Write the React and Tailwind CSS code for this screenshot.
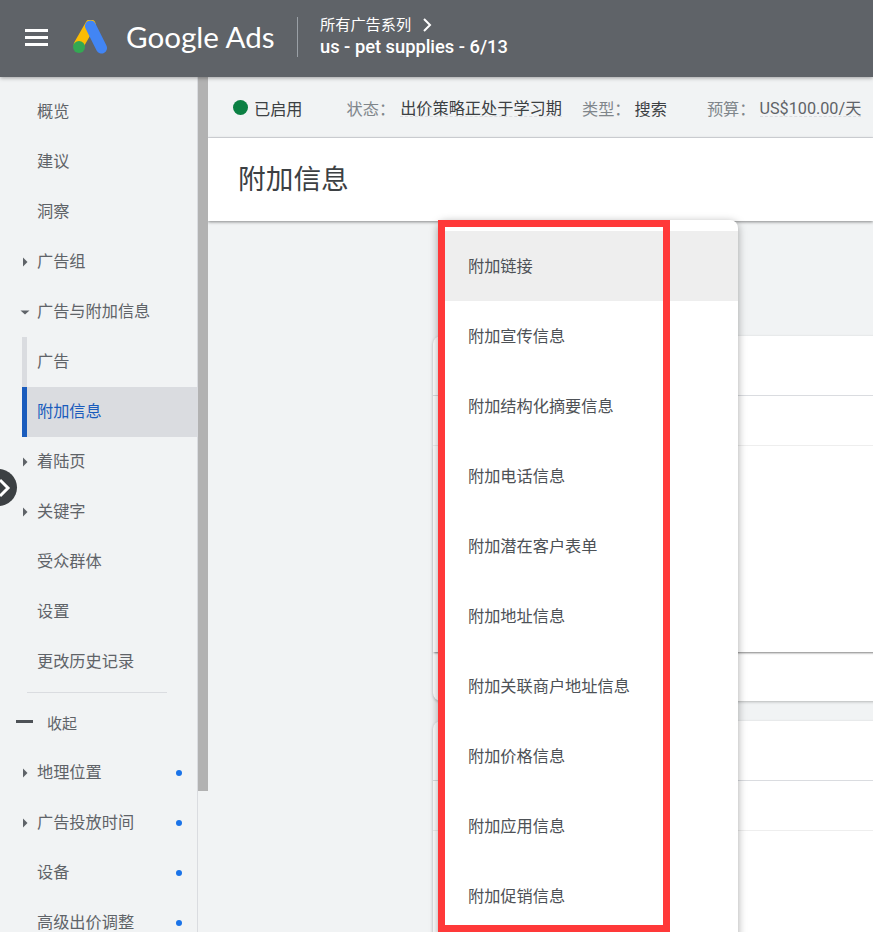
import React from "react";

const FONT = { fontFamily: 'Roboto, "Noto Sans CJK SC", sans-serif' };

function Tri({ open }) {
  return (
    <svg width="12" height="12" viewBox="0 0 12 12" className="absolute left-[19px] top-[19px]">
      {open ? <path d="M1.5 4.5h9L6 8.5z" fill="#5f6368" /> : <path d="M4 1.5l4.5 4.5L4 10.5z" fill="#5f6368" />}
    </svg>
  );
}

function NavItem({ label, tri, open, dot, indent, active }) {
  return (
    <div className={"relative flex h-[50px] items-center pl-[37px] text-[16.2px] " + (active ? "text-[#1a5cbd]" : "text-[#5f6368]")}>
      {indent && (
        <span className={"absolute left-[22px] top-0 h-full w-[5px] " + (active ? "bg-[#1a5cbd]" : "bg-[#dadce0]")} />
      )}
      {active && <span className="absolute left-[27px] right-0 top-0 h-full bg-[#dadce0] -z-0" />}
      {tri && <Tri open={open} />}
      <span className="relative">{label}</span>
      {dot && <span className="absolute left-[176px] top-[22px] h-[6px] w-[6px] rounded-full bg-[#1a73e8]" />}
    </div>
  );
}

function Logo() {
  return (
    <svg width="38" height="36" viewBox="0 0 38 36" className="ml-[24px] mt-[2px]">
      <path d="M18.5 4.5 L7 24.5" stroke="#fbbc04" strokeWidth="10.5" strokeLinecap="round" />
      <path d="M18.5 6 L29.5 28" stroke="#4285f4" strokeWidth="11" strokeLinecap="round" />
      <circle cx="7" cy="27" r="6" fill="#34a853" />
    </svg>
  );
}

const MENU = [
  "附加链接",
  "附加宣传信息",
  "附加结构化摘要信息",
  "附加电话信息",
  "附加潜在客户表单",
  "附加地址信息",
  "附加关联商户地址信息",
  "附加价格信息",
  "附加应用信息",
  "附加促销信息",
];

export default function App() {
  return (
    <div style={FONT} className="relative flex h-[932px] w-[873px] flex-col overflow-hidden bg-[#f1f3f4]">
      <header className="relative z-20 flex h-[77px] shrink-0 items-center bg-[#5f6368] pb-[3px] text-white shadow-[0_1px_4px_rgba(0,0,0,0.35)]">
        <div className="ml-[25px] flex w-[23px] flex-col gap-[4px]">
          <span className="h-[3px] bg-white" />
          <span className="h-[3px] bg-white" />
          <span className="h-[3px] bg-white" />
        </div>
        <Logo />
        <span style={{ fontFamily: 'Lato, sans-serif' }} className="ml-[16px] w-[171px] text-[29.6px] leading-none">Google Ads</span>
        <span className="h-[40px] w-px bg-[#9aa0a6]" />
        <div className="mb-[2px] ml-[22px] flex flex-col">
          <div className="flex h-[22px] items-center gap-[10px] text-[15.2px]">
            所有广告系列
            <svg width="14" height="16" viewBox="0 0 14 16"><path d="M3 2l6 6-6 6" fill="none" stroke="#fff" strokeWidth="2" /></svg>
          </div>
          <div className="h-[22px] text-[18.3px] font-medium leading-[22px]">us - pet supplies - 6/13</div>
        </div>
      </header>

      <div className="flex min-h-0 flex-1">
        <nav className="relative z-0 w-[198px] shrink-0 border-r border-[#dadce0] pt-[10px]">
          <NavItem label="概览" />
          <NavItem label="建议" />
          <NavItem label="洞察" />
          <NavItem label="广告组" tri />
          <NavItem label="广告与附加信息" tri open />
          <NavItem label="广告" indent />
          <NavItem label="附加信息" indent active />
          <NavItem label="着陆页" tri />
          <NavItem label="关键字" tri />
          <NavItem label="受众群体" />
          <NavItem label="设置" />
          <NavItem label="更改历史记录" />
          <div className="ml-[27px] mt-[5px] h-px w-[140px] bg-[#dadce0]" />
          <div className="flex h-[60px] items-center pt-[2px] text-[15px] text-[#5f6368]">
            <span className="ml-[16px] mb-[5px] h-[3px] w-[17px] bg-[#4d5156]" />
            <span className="ml-[14px]">收起</span>
          </div>
          <div className="-mt-[5px]">
            <NavItem label="地理位置" tri dot />
            <NavItem label="广告投放时间" tri dot />
            <NavItem label="设备" dot />
            <NavItem label="高级出价调整" dot />
          </div>
        </nav>

        <div className="w-[10px] shrink-0">
          <div className="h-[714px] bg-[#b2b2b2]" />
        </div>

        <main className="min-w-0 flex-1 overflow-hidden">
          <div className="flex h-[61px] items-center border-b border-[#dadce0] pt-[4px] text-[16.2px] leading-[15px] whitespace-nowrap">
            <span className="mb-[4px] ml-[25px] h-[15px] w-[15px] rounded-full bg-[#0b8043]" />
            <span className="ml-[6px] text-[#3c4043]">已启用</span>
            <span className="ml-[44px] text-[#80868b]">状态：</span>
            <span className="ml-[5px] border-b border-dashed border-[#dadce0] text-[#3c4043]">出价策略正处于学习期</span>
            <span className="ml-[20px] text-[#80868b]">类型：</span>
            <span className="ml-[4px] text-[#3c4043]">搜索</span>
            <span className="ml-[40px] text-[#80868b]">预算：</span>
            <span className="ml-[4px] border-b border-dashed border-[#dadce0] text-[#5f6368]">US$100.00/天</span>
          </div>
          <div className="relative flex h-[83px] items-center bg-white pl-[30px] text-[27.7px] text-[#3c4043] shadow-[0_1px_3px_rgba(0,0,0,0.45)]">
            附加信息
          </div>

          <div className="ml-[225px] mt-[115px] w-[500px] rounded-l-lg bg-white shadow-[0_1px_3px_rgba(0,0,0,0.25)]">
            <div className="h-[60px] border-b border-[#dadce0]" />
            <div className="h-[50px] border-b border-[#eeeeee]" />
            <div className="h-[206px] shadow-[0_2px_2px_-1px_rgba(0,0,0,0.5)]" />
            <div className="h-[49px] rounded-bl-lg" />
          </div>
          <div className="ml-[225px] mt-[20px] w-[500px] rounded-tl-lg bg-white shadow-[0_1px_3px_rgba(0,0,0,0.25)]">
            <div className="h-[60px] border-b border-[#dadce0]" />
            <div className="h-[50px] border-b border-[#eeeeee]" />
            <div className="h-[150px]" />
          </div>
        </main>
      </div>

      <div className="absolute -left-[20px] top-[469px] z-30 flex h-[37px] w-[37px] items-center justify-center rounded-full bg-[#3c4043]">
        <svg width="14" height="22" viewBox="0 0 14 22" className="ml-[10px]"><path d="M3 3l8 8-8 8" fill="none" stroke="#fff" strokeWidth="3" /></svg>
      </div>

      <div className="absolute left-[438px] top-[220px] z-30 h-[730px] w-[300px] rounded-t-lg bg-white pt-[11px] shadow-[0_2px_8px_rgba(0,0,0,0.35)]">
        {MENU.map((m, i) => (
          <div key={m} className={"flex h-[70px] items-center pl-[30px] pt-[2px] text-[16.2px] text-[#4d5156] " + (i === 0 ? "bg-[#eeeeee]" : "")}>{m}</div>
        ))}
      </div>
      <div className="pointer-events-none absolute left-[438px] top-[220px] z-40 h-[712px] w-[232px] border-[7px] border-[#ff3939]" />
    </div>
  );
}
